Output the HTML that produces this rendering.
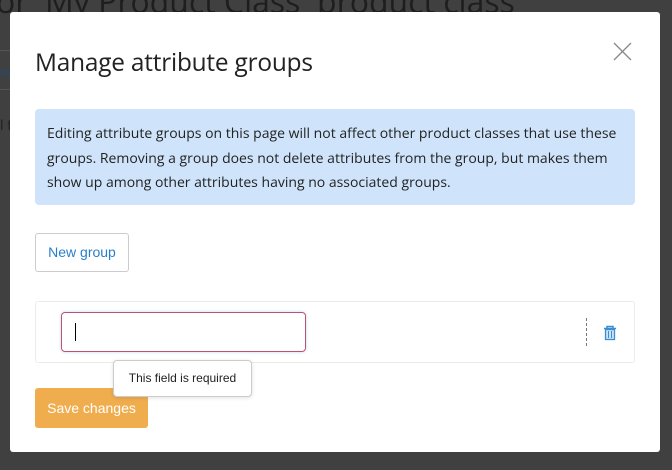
<!DOCTYPE html>
<html><head><meta charset="utf-8"><style>
*{box-sizing:border-box;margin:0;padding:0}
html,body{width:672px;height:470px;overflow:hidden;background:#404040;font-family:"Open Sans","Liberation Sans",sans-serif}
.bgt{position:absolute;left:-4px;top:-20px;font-size:32px;color:#1e1e1e;white-space:nowrap}
.ln{position:absolute;left:0;width:12px;height:1px;background:#555}
.modal{position:absolute;left:10px;top:12px;width:650px;height:440px;background:#fff;border-radius:3px}
h1{position:absolute;left:25px;top:34px;font-size:24.4px;font-weight:400;color:#222;letter-spacing:-0.2px}
.close{position:absolute;left:602px;top:29px}
.info{position:absolute;left:25px;top:97px;width:600px;height:96px;background:#cfe4fa;border-radius:4px;padding:13px 12px;font-size:14px;line-height:24.5px;color:#222}
.ng{position:absolute;left:25px;top:221px;width:94px;height:39px;border:1px solid #ccc;border-radius:3px;color:#2a7fc9;font-size:14px;text-align:center;line-height:37px;font-family:"Liberation Sans",sans-serif}
.row{position:absolute;left:25px;top:289px;width:600px;height:62px;border:1px solid #ececec;border-radius:3px}
.inp{position:absolute;left:25px;top:10px;width:245px;height:40px;border:1px solid #c0506e;border-radius:4px;box-shadow:0 0 3px #bcd8f5}
.cur{position:absolute;left:13px;top:10px;width:1px;height:18px;background:#000}
.dash{position:absolute;left:550px;top:16px;height:28px;border-left:1px dashed #777}
.trash{position:absolute;left:567px;top:23px}
.tip{position:absolute;left:103px;top:348px;width:139px;height:37px;border:1px solid #ccc;border-radius:4px;background:#fff;font-size:12px;color:#222;text-align:center;line-height:35px;box-shadow:0 1px 4px rgba(0,0,0,.12);font-family:"Liberation Sans",sans-serif}
.save{position:absolute;left:25px;top:376px;width:113px;height:40px;background:#f0ad4e;border-radius:3px;color:#fff;font-size:14px;line-height:40px;text-align:center;font-family:"Liberation Sans",sans-serif}
</style></head><body>
<div class="bgt">or &nbsp;My Product Class &nbsp;product class</div>
<div class="ln" style="top:50px"></div>
<div class="ln" style="top:89px"></div>
<div style="position:absolute;left:0;top:64px;font-size:12px;color:#27496b">Ma</div>
<div style="position:absolute;left:0;top:116px;font-size:14px;color:#1e1e1e">l f</div>
<div class="modal">
<h1>Manage attribute groups</h1>
<svg class="close" width="20" height="20" viewBox="0 0 20 20"><path d="M2 2L19 19M19 2L2 19" stroke="#888" stroke-width="1.3"/></svg>
<div class="info">Editing attribute groups on this page will not affect other product classes that use these groups. Removing a group does not delete attributes from the group, but makes them show up among other attributes having no associated groups.</div>
<div class="ng">New group</div>
<div class="row">
<div class="inp"><div class="cur"></div></div>
<div class="dash"></div>
<svg class="trash" width="14" height="16" viewBox="0 0 14 16"><path d="M4 3V1.5h6V3M1 3.5h12" stroke="#3a8ed6" stroke-width="1.5" fill="none"/><rect x="2.5" y="4.5" width="9" height="10" fill="#cfe3f6" stroke="#3a8ed6" stroke-width="1.3"/><path d="M5.5 6v7M8.5 6v7" stroke="#3a8ed6" stroke-width="1"/></svg>
</div>
<div class="save">Save changes</div>
<div class="tip">This field is required</div>
</div>
</body></html>
